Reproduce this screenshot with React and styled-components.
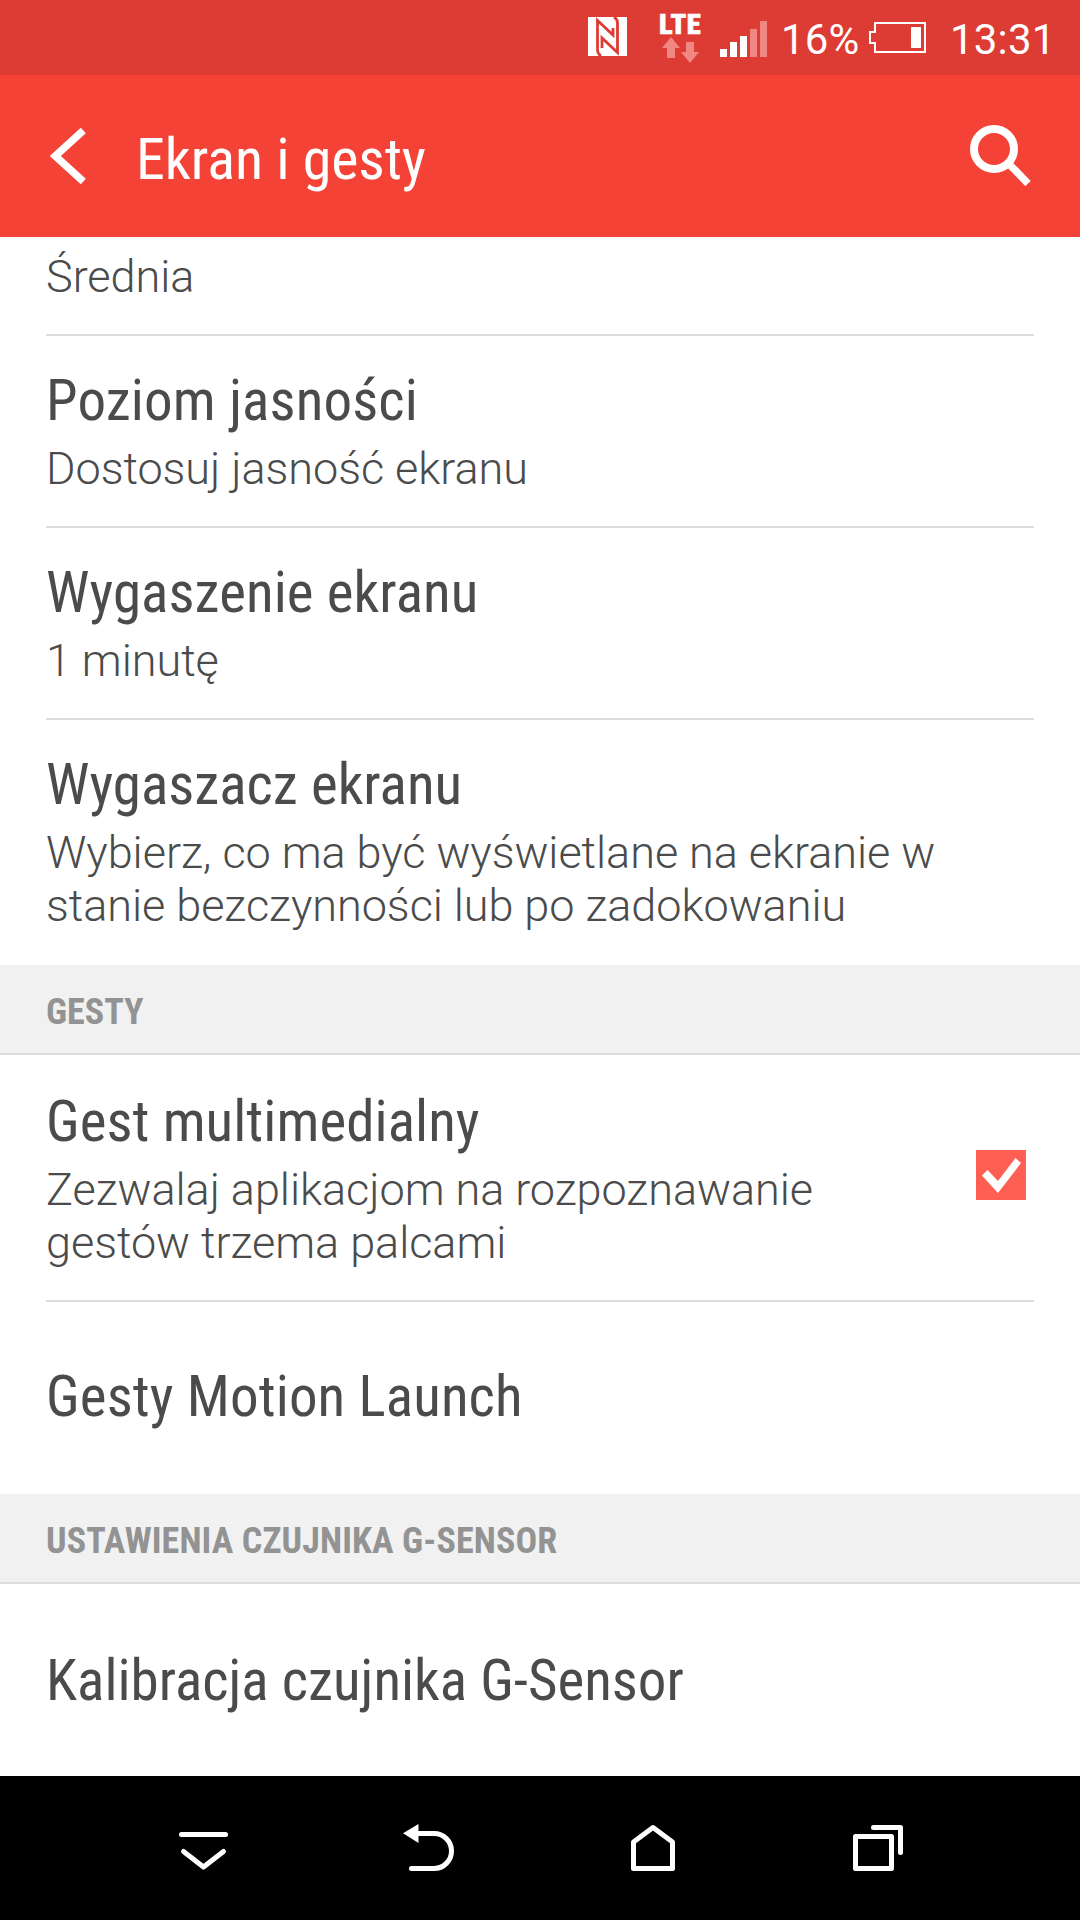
import styled, { createGlobalStyle } from "styled-components";

const displaySettings = [
  { title: "Poziom jasności", lines: ["Dostosuj jasność ekranu"], spacing: 0.15 },
  { title: "Wygaszenie ekranu", lines: ["1 minutę"], spacing: 0.07 },
  {
    title: "Wygaszacz ekranu",
    lines: ["Wybierz, co ma być wyświetlane na ekranie w", "stanie bezczynności lub po zadokowaniu"],
    last: true,
  },
];

function SettingRow({ title, lines, spacing, first, last, children }) {
  return (
    <Row $first={first} $last={last} $single={!lines}>
      <div>
        <Title $spacing={spacing}>{title}</Title>
        {lines && (
          <Summary>
            {lines.map((line) => (
              <SubTitle key={line}>{line}</SubTitle>
            ))}
          </Summary>
        )}
      </div>
      {children}
    </Row>
  );
}

function StatusIcons() {
  return (
    <>
      <NfcIcon viewBox="0 0 39 39">
        <rect width="39" height="39" fill="#fff" />
        <g fill="none" stroke="#dc3c33" strokeWidth="2.800">
          <path d="M13 39Q9.500 37 9.500 33V3.500L25 18V11" />
          <path d="M26 0Q29.500 2 29.500 6V35.500L14 21V31" />
        </g>
      </NfcIcon>
      <Network>
        <Lte>LTE</Lte>
        <svg width="37" height="26" viewBox="0 0 37 26" fill="#f08782">
          <path d="M9 0L18 11H13V21H5V11H0Z" />
          <path d="M24 5H32V15H37L28 26L19 15H24Z" />
        </svg>
      </Network>
      <SignalIcon viewBox="0 0 47 36">
        <path d="M0 28h7v8H0zM10 21h7v15h-7zM20 15h7v21h-7z" fill="#fff" />
        <path d="M30 8h7v28h-7zM40 0h7v36h-7z" fill="#f08782" />
      </SignalIcon>
    </>
  );
}

function App() {
  return (
    <Screen>
      <GlobalStyle />
      <StatusBar>
        <StatusIcons />
        <Percent>16%</Percent>
        <BatteryIcon viewBox="0 0 57 31">
          <path d="M6 1H56V30H6V21H1V10H6Z" fill="none" stroke="#fff" strokeWidth="2" />
          <rect x="42" y="5" width="10" height="21" fill="#fff" />
        </BatteryIcon>
        <Clock>13:31</Clock>
      </StatusBar>

      <Header>
        <BackIcon viewBox="0 0 36 56">
          <path d="M33.300 2.500L5.300 28L33.300 53.500" fill="none" stroke="#fff" strokeWidth="7.500" />
        </BackIcon>
        <HeaderTitle>Ekran i gesty</HeaderTitle>
        <SearchIcon viewBox="0 0 61 61" fill="none" stroke="#fff">
          <circle cx="24" cy="24" r="20" strokeWidth="8" />
          <path d="M38 38L58 58.500" strokeWidth="7.500" />
        </SearchIcon>
      </Header>

      <ClippedRow>
        <SubTitle>Średnia</SubTitle>
      </ClippedRow>
      {displaySettings.map((item) => (
        <SettingRow key={item.title} {...item} />
      ))}

      <Section>GESTY</Section>
      <SettingRow
        title="Gest multimedialny"
        lines={["Zezwalaj aplikacjom na rozpoznawanie", "gestów trzema palcami"]}
        spacing={0.06}
        first
      >
        <CheckBox viewBox="0 0 50 50">
          <rect width="50" height="50" fill="#ff5f52" />
          <path d="M6 25.500L11.500 20L22 31L39.500 8L45 13L22 43Z" fill="#fff" />
        </CheckBox>
      </SettingRow>
      <SettingRow title="Gesty Motion Launch" spacing={0.12} last />

      <Section $spacing={0.12}>USTAWIENIA CZUJNIKA G-SENSOR</Section>
      <SettingRow title="Kalibracja czujnika G-Sensor" first last />

      <NavBar>
        <NavIcon viewBox="0.5 0 60 60">
          <path d="M8 24.500H52M10 41.500L30 57L50 41.500" />
        </NavIcon>
        <NavIcon viewBox="0.5 0 60 60">
          <path d="M20 23.500H35.500A17.500 17.500 0 0 1 35.500 58.500H13" />
          <path d="M4.500 23.200L20 14V33Z" fill="#fff" stroke="none" />
        </NavIcon>
        <NavIcon viewBox="0.5 0 60 60">
          <path d="M10 58.500V32L29.500 17.500L49 32V58.500Z" />
        </NavIcon>
        <NavIcon viewBox="0.5 0 60 60">
          <path d="M7 26.500H43V58.500H7ZM25 17.500H52V42.500" />
        </NavIcon>
      </NavBar>
    </Screen>
  );
}

const GlobalStyle = createGlobalStyle`
  * {
    box-sizing: border-box;
  }
  body {
    margin: 0;
    background: #fff;
  }
  svg {
    display: block;
    flex-shrink: 0;
  }
`;

const Screen = styled.div`
  width: 1080px;
  height: 1920px;
  overflow: hidden;
  display: flex;
  flex-direction: column;
  font-family: Roboto, sans-serif;
  color: #4b4b4b;
  background: #fff;
`;

const StatusBar = styled.div`
  height: 75px;
  padding-left: 588px;
  display: flex;
  align-items: flex-start;
  color: #fff;
  background: #dc3c33;
`;

const NfcIcon = styled.svg`
  width: 39px;
  height: 39px;
  margin-top: 17px;
`;

const Network = styled.div`
  width: 43px;
  margin: 14px 0 0 32px;

  svg {
    margin: 2px 0 0 3px;
  }
`;

const Lte = styled.div`
  height: 21px;
  font-size: 28.5px;
  font-weight: 900;
  font-stretch: 75%;
  line-height: 21px;
  letter-spacing: 0.6px;
  -webkit-text-stroke: 0.6px #fff;
`;

const SignalIcon = styled.svg`
  width: 47px;
  height: 36px;
  margin: 21px 0 0 18px;
`;

const Percent = styled.div`
  width: 88px;
  margin: 15px 0 0 14px;
  font-size: 42px;
  line-height: 50px;
  letter-spacing: 0.2px;
`;

const BatteryIcon = styled.svg`
  width: 57px;
  height: 31px;
  margin-top: 22px;
`;

const Clock = styled.div`
  margin: 15px 0 0 24px;
  font-size: 42px;
  line-height: 50px;
  letter-spacing: 0.2px;
`;

const Header = styled.header`
  height: 162px;
  padding: 0 49px 0 50px;
  display: flex;
  align-items: flex-start;
  color: #fff;
  background: #f44336;
`;

const BackIcon = styled.svg`
  width: 36px;
  height: 56px;
  margin-top: 53px;
`;

const HeaderTitle = styled.h1`
  flex: 1;
  margin: 51px 0 0 50px;
  font-family: "Roboto Condensed", Roboto, sans-serif;
  font-stretch: 75%;
  font-size: 58px;
  font-weight: 400;
  line-height: 67px;
  letter-spacing: -0.08px;
`;

const SearchIcon = styled.svg`
  width: 61px;
  height: 61px;
  margin-top: 50px;
`;

/* rows under a section header sit 2px lower */
const Row = styled.div`
  height: ${(props) => (props.$single ? "192px" : "auto")};
  margin: 0 46px;
  padding: ${(props) => (props.$single ? 61 : 31) + (props.$first ? 2 : 0)}px 8px ${(props) => (props.$single ? 0 : 31)}px 0;
  display: flex;
  justify-content: space-between;
  align-items: ${(props) => (props.$single ? "flex-start" : "center")};
  border-bottom: 2px solid ${(props) => (props.$last ? "transparent" : "#ddd")};
`;

const ClippedRow = styled.div`
  height: 99px;
  margin: 0 46px;
  padding-top: 13px;
  border-bottom: 2px solid #ddd;
`;

const Title = styled.h2`
  margin: 0;
  font-family: "Roboto Condensed", Roboto, sans-serif;
  font-stretch: 75%;
  font-size: 57px;
  font-weight: 400;
  line-height: 67px;
  letter-spacing: ${(props) => props.$spacing || 0}px;
  white-space: nowrap;
`;

const Summary = styled.div`
  margin-top: 8px;
`;

const SubTitle = styled.p`
  margin: 0;
  font-size: 45px;
  font-weight: 300;
  line-height: 53px;
  letter-spacing: -0.04px;
  white-space: nowrap;
`;

const Section = styled.div`
  height: 90px;
  padding: 5px 46px 0;
  font-family: "Roboto Condensed", Roboto, sans-serif;
  font-stretch: 75%;
  font-size: 36px;
  font-weight: 700;
  line-height: 84px;
  letter-spacing: ${(props) => props.$spacing || 0}px;
  color: #939393;
  background: #f1f1f1;
  border-bottom: 2px solid #ddd;
`;

const CheckBox = styled.svg`
  width: 50px;
  height: 50px;
  margin-top: -8px;
`;

const NavBar = styled.nav`
  height: 144px;
  padding: 33px 90px 0;
  display: flex;
  background: #000;
`;

const NavIcon = styled.svg`
  width: 60px;
  height: 62px;
  margin: 0 81px 0 84px;
  fill: none;
  stroke: #fff;
  stroke-width: 5;
  stroke-linecap: round;
  stroke-linejoin: round;
`;

export default App;
